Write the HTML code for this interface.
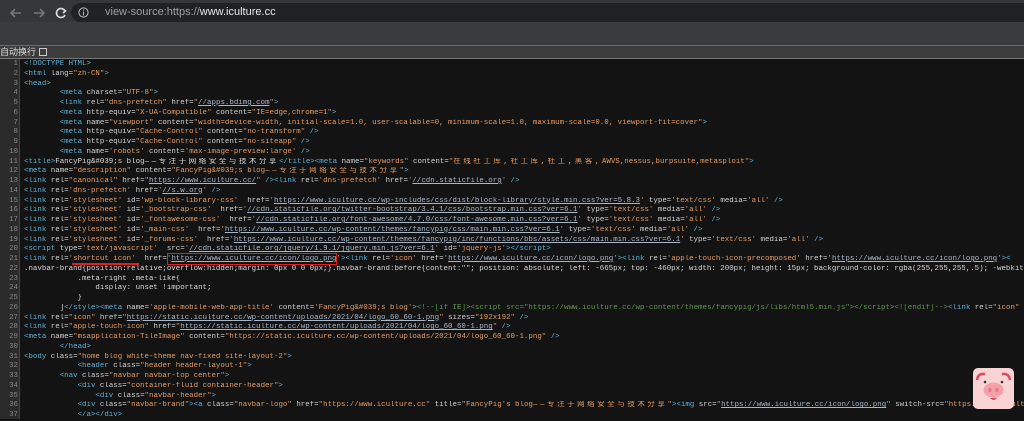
<!DOCTYPE html>
<html><head><meta charset="utf-8"><style>
*{margin:0;padding:0;box-sizing:border-box}
body{width:1024px;height:419px;overflow:hidden;background:#131313;position:relative;font-family:"Liberation Sans","Noto Sans CJK SC",sans-serif}
#tb{position:absolute;left:0;top:0;width:1024px;height:45px;background:#35363a}
#tb2{position:absolute;left:0;top:22px;width:1024px;height:23px;background:#3a3b3f}
#pill{position:absolute;left:71px;top:3px;width:980px;height:19px;border-radius:10px;background:#202124;color:#9aa0a6;font-size:11px;line-height:19px;padding-left:34px}
#pill b{color:#e8eaed;font-weight:normal}
#ibar{position:absolute;left:0;top:45px;width:1024px;height:14px;background:#3c3c3c;border-top:1px solid #6a6a6a;border-bottom:1px solid #777;color:#ddd;font-size:9px;line-height:12px}
#gut{position:absolute;left:0;top:59px;width:20px;height:360px;background:#2a2a2a;border-right:1px solid #444}
#code{position:absolute;left:0;top:60px;width:1024px;font-family:"Liberation Mono","Noto Sans CJK SC",monospace;font-size:7.45px;line-height:9.75px;color:#d8d8d8}
.r{height:9.75px;overflow:hidden;white-space:pre}
.n{display:inline-block;width:18px;text-align:right;color:#888;margin-right:6px}
.t{color:#5db0d7}.a{color:#d0d0d0}.v{color:#e39a62}.l{color:#a9b6c8;text-decoration:underline}.c{color:#5a9a4a}
.z{letter-spacing:2.6px}
</style></head><body>
<div id="tb"></div><div id="tb2"></div>
<svg style="position:absolute;left:8px;top:6px" width="60" height="14" viewBox="0 0 60 14" fill="none" stroke-width="1.6">
<path d="M13 7H3M7 3L3 7L7 11" stroke="#777"/><path d="M26 7H36M32 3L36 7L32 11" stroke="#777"/><path d="M57 5A4.5 4.5 0 1 0 57 9" stroke="#ddd"/><path d="M55 3L57.5 5L55 7" stroke="#ddd"/></svg>
<div id="pill">view-source:https://<b>www.iculture.cc</b></div>
<svg style="position:absolute;left:78px;top:7px" width="11" height="11"><circle cx="5.5" cy="5.5" r="4.6" stroke="#bbb" fill="none"/><path d="M5.5 4.5V8.5M5.5 2.5V3.5" stroke="#bbb"/></svg>
<div id="ibar">自动换行 <span style="display:inline-block;width:8px;height:8px;border:1px solid #ccc;vertical-align:-1px"></span></div>
<div id="gut"></div>
<div id="code"><div class="r"><span class="n">1</span><span class="t">&lt;!DOCTYPE HTML&gt;</span></div><div class="r"><span class="n">2</span><span class="t">&lt;html </span><span class="a">lang=</span><span class="v">"zh-CN"</span><span class="t">&gt;</span></div><div class="r"><span class="n">3</span><span class="t">&lt;head&gt;</span></div><div class="r"><span class="n">4</span>        <span class="t">&lt;meta </span><span class="a">charset=</span><span class="v">"UTF-8"</span><span class="t">&gt;</span></div><div class="r"><span class="n">5</span>        <span class="t">&lt;link </span><span class="a">rel=</span><span class="v">"dns-prefetch"</span> <span class="a">href=</span><span class="v">"</span><span class="l">//apps.bdimg.com</span><span class="v">"</span><span class="t">&gt;</span></div><div class="r"><span class="n">6</span>        <span class="t">&lt;meta </span><span class="a">http-equiv=</span><span class="v">"X-UA-Compatible"</span> <span class="a">content=</span><span class="v">"IE=edge,chrome=1"</span><span class="t">&gt;</span></div><div class="r"><span class="n">7</span>        <span class="t">&lt;meta </span><span class="a">name=</span><span class="v">"viewport"</span> <span class="a">content=</span><span class="v">"width=device-width, initial-scale=1.0, user-scalable=0, minimum-scale=1.0, maximum-scale=0.0, viewport-fit=cover"</span><span class="t">&gt;</span></div><div class="r"><span class="n">8</span>        <span class="t">&lt;meta </span><span class="a">http-equiv=</span><span class="v">"Cache-Control"</span> <span class="a">content=</span><span class="v">"no-transform"</span> <span class="t">/&gt;</span></div><div class="r"><span class="n">9</span>        <span class="t">&lt;meta </span><span class="a">http-equiv=</span><span class="v">"Cache-Control"</span> <span class="a">content=</span><span class="v">"no-siteapp"</span> <span class="t">/&gt;</span></div><div class="r"><span class="n">10</span>        <span class="t">&lt;meta </span><span class="a">name=</span><span class="v">'robots'</span> <span class="a">content=</span><span class="v">'max-image-preview:large'</span> <span class="t">/&gt;</span></div><div class="r"><span class="n">11</span><span class="t">&lt;title&gt;</span>FancyPig&amp;#039;s blog<span class="z">——专注于网络安全与技术分享</span><span class="t">&lt;/title&gt;&lt;meta </span><span class="a">name=</span><span class="v">"keywords"</span> <span class="a">content=</span><span class="v">"<span class="z">在线社工库,社工库,社工,黑客,</span>AWVS,nessus,burpsuite,metasploit"</span><span class="t">&gt;</span></div><div class="r"><span class="n">12</span><span class="t">&lt;meta </span><span class="a">name=</span><span class="v">"description"</span> <span class="a">content=</span><span class="v">"FancyPig&amp;#039;s blog<span class="z">——专注于网络安全与技术分享</span>"</span><span class="t">&gt;</span></div><div class="r"><span class="n">13</span><span class="t">&lt;link </span><span class="a">rel=</span><span class="v">"canonical"</span> <span class="a">href=</span><span class="v">"</span><span class="l">https://www.iculture.cc/</span><span class="v">"</span> <span class="t">/&gt;&lt;link </span><span class="a">rel=</span><span class="v">'dns-prefetch'</span> <span class="a">href=</span><span class="v">'</span><span class="l">//cdn.staticfile.org</span><span class="v">'</span> <span class="t">/&gt;</span></div><div class="r"><span class="n">14</span><span class="t">&lt;link </span><span class="a">rel=</span><span class="v">'dns-prefetch'</span> <span class="a">href=</span><span class="v">'</span><span class="l">//s.w.org</span><span class="v">'</span> <span class="t">/&gt;</span></div><div class="r"><span class="n">15</span><span class="t">&lt;link </span><span class="a">rel=</span><span class="v">'stylesheet'</span> <span class="a">id=</span><span class="v">'wp-block-library-css'</span>  <span class="a">href=</span><span class="v">'</span><span class="l">https://www.iculture.cc/wp-includes/css/dist/block-library/style.min.css?ver=5.8.3</span><span class="v">'</span> <span class="a">type=</span><span class="v">'text/css'</span> <span class="a">media=</span><span class="v">'all'</span> <span class="t">/&gt;</span></div><div class="r"><span class="n">16</span><span class="t">&lt;link </span><span class="a">rel=</span><span class="v">'stylesheet'</span> <span class="a">id=</span><span class="v">'_bootstrap-css'</span>  <span class="a">href=</span><span class="v">'</span><span class="l">//cdn.staticfile.org/twitter-bootstrap/3.4.1/css/bootstrap.min.css?ver=6.1</span><span class="v">'</span> <span class="a">type=</span><span class="v">'text/css'</span> <span class="a">media=</span><span class="v">'all'</span> <span class="t">/&gt;</span></div><div class="r"><span class="n">17</span><span class="t">&lt;link </span><span class="a">rel=</span><span class="v">'stylesheet'</span> <span class="a">id=</span><span class="v">'_fontawesome-css'</span>  <span class="a">href=</span><span class="v">'</span><span class="l">//cdn.staticfile.org/font-awesome/4.7.0/css/font-awesome.min.css?ver=6.1</span><span class="v">'</span> <span class="a">type=</span><span class="v">'text/css'</span> <span class="a">media=</span><span class="v">'all'</span> <span class="t">/&gt;</span></div><div class="r"><span class="n">18</span><span class="t">&lt;link </span><span class="a">rel=</span><span class="v">'stylesheet'</span> <span class="a">id=</span><span class="v">'_main-css'</span>  <span class="a">href=</span><span class="v">'</span><span class="l">https://www.iculture.cc/wp-content/themes/fancypig/css/main.min.css?ver=6.1</span><span class="v">'</span> <span class="a">type=</span><span class="v">'text/css'</span> <span class="a">media=</span><span class="v">'all'</span> <span class="t">/&gt;</span></div><div class="r"><span class="n">19</span><span class="t">&lt;link </span><span class="a">rel=</span><span class="v">'stylesheet'</span> <span class="a">id=</span><span class="v">'_forums-css'</span>  <span class="a">href=</span><span class="v">'</span><span class="l">https://www.iculture.cc/wp-content/themes/fancypig/inc/functions/bbs/assets/css/main.min.css?ver=6.1</span><span class="v">'</span> <span class="a">type=</span><span class="v">'text/css'</span> <span class="a">media=</span><span class="v">'all'</span> <span class="t">/&gt;</span></div><div class="r"><span class="n">20</span><span class="t">&lt;script </span><span class="a">type=</span><span class="v">'text/javascript'</span>  <span class="a">src=</span><span class="v">'</span><span class="l">//cdn.staticfile.org/jquery/1.9.1/jquery.min.js?ver=6.1</span><span class="v">'</span> <span class="a">id=</span><span class="v">'jquery-js'</span><span class="t">&gt;&lt;/script&gt;</span></div><div class="r"><span class="n">21</span><span class="t">&lt;link </span><span class="a">rel=</span><span class="v">'shortcut icon'</span>  <span class="a">href=</span><span class="v">'</span><span class="l">https://www.iculture.cc/icon/logo.png</span><span class="v">'</span><span class="t">&gt;&lt;link </span><span class="a">rel=</span><span class="v">'icon'</span> <span class="a">href=</span><span class="v">'</span><span class="l">https://www.iculture.cc/icon/logo.png</span><span class="v">'</span><span class="t">&gt;&lt;link </span><span class="a">rel=</span><span class="v">'apple-touch-icon-precomposed'</span> <span class="a">href=</span><span class="v">'</span><span class="l">https://www.iculture.cc/icon/logo.png</span><span class="v">'</span><span class="t">&gt;&lt;</span></div><div class="r"><span class="n">22</span>.navbar-brand{position:relative;overflow:hidden;margin: 0px 0 0 0px;}.navbar-brand:before{content:""; position: absolute; left: -665px; top: -460px; width: 200px; height: 15px; background-color: rgba(255,255,255,.5); -webkit</div><div class="r"><span class="n">23</span>            .meta-right .meta-like{</div><div class="r"><span class="n">24</span>                display: unset !important;</div><div class="r"><span class="n">25</span>            }</div><div class="r"><span class="n">26</span>        ]<span class="t">&lt;/style&gt;&lt;meta </span><span class="a">name=</span><span class="v">'apple-mobile-web-app-title'</span> <span class="a">content=</span><span class="v">'FancyPig&amp;#039;s blog'</span><span class="t">&gt;</span><span class="c">&lt;!--[if IE]&gt;&lt;script src="https://www.iculture.cc/wp-content/themes/fancypig/js/libs/html5.min.js"&gt;&lt;/script&gt;&lt;![endif]--&gt;</span><span class="t">&lt;link </span><span class="a">rel=</span><span class="v">"icon"</span> </div><div class="r"><span class="n">27</span><span class="t">&lt;link </span><span class="a">rel=</span><span class="v">"icon"</span> <span class="a">href=</span><span class="v">"</span><span class="l">https://static.iculture.cc/wp-content/uploads/2021/04/logo_60_60-1.png</span><span class="v">"</span> <span class="a">sizes=</span><span class="v">"192x192"</span> <span class="t">/&gt;</span></div><div class="r"><span class="n">28</span><span class="t">&lt;link </span><span class="a">rel=</span><span class="v">"apple-touch-icon"</span> <span class="a">href=</span><span class="v">"</span><span class="l">https://static.iculture.cc/wp-content/uploads/2021/04/logo_60_60-1.png</span><span class="v">"</span> <span class="t">/&gt;</span></div><div class="r"><span class="n">29</span><span class="t">&lt;meta </span><span class="a">name=</span><span class="v">"msapplication-TileImage"</span> <span class="a">content=</span><span class="v">"https://static.iculture.cc/wp-content/uploads/2021/04/logo_60_60-1.png"</span> <span class="t">/&gt;</span></div><div class="r"><span class="n">30</span>        <span class="t">&lt;/head&gt;</span></div><div class="r"><span class="n">31</span><span class="t">&lt;body </span><span class="a">class=</span><span class="v">"home blog white-theme nav-fixed site-layout-2"</span><span class="t">&gt;</span></div><div class="r"><span class="n">32</span>            <span class="t">&lt;header </span><span class="a">class=</span><span class="v">"header header-layout-1"</span><span class="t">&gt;</span></div><div class="r"><span class="n">33</span>        <span class="t">&lt;nav </span><span class="a">class=</span><span class="v">"navbar navbar-top center"</span><span class="t">&gt;</span></div><div class="r"><span class="n">34</span>            <span class="t">&lt;div </span><span class="a">class=</span><span class="v">"container-fluid container-header"</span><span class="t">&gt;</span></div><div class="r"><span class="n">35</span>                <span class="t">&lt;div </span><span class="a">class=</span><span class="v">"navbar-header"</span><span class="t">&gt;</span></div><div class="r"><span class="n">36</span>            <span class="t">&lt;div </span><span class="a">class=</span><span class="v">"navbar-brand"</span><span class="t">&gt;&lt;a </span><span class="a">class=</span><span class="v">"navbar-logo"</span> <span class="a">href=</span><span class="v">"https://www.iculture.cc"</span> <span class="a">title=</span><span class="v">"FancyPig's blog<span class="z">——专注于网络安全与技术分享</span>"</span><span class="t">&gt;&lt;img </span><span class="a">src=</span><span class="v">"</span><span class="l">https://www.iculture.cc/icon/logo.png</span><span class="v">"</span> <span class="a">switch-src=</span><span class="v">"https://www.iculture.cc</span></div><div class="r"><span class="n">37</span>            <span class="t">&lt;/a&gt;&lt;/div&gt;</span></div></div>
<div style="position:absolute;left:167px;top:253px;width:170px;height:12px;border:1.5px solid #e02020"></div>
<div style="position:absolute;left:72px;top:263px;width:67px;height:2px;background:#e02020"></div>
<svg style="position:absolute;left:973px;top:368px" width="41" height="41" viewBox="0 0 41 41">
<rect x="0" y="0" width="41" height="41" rx="5" fill="#fad4d4"/>
<path d="M4 12Q5 5 12 6" stroke="#e0485a" stroke-width="2.5" fill="none"/><path d="M37 12Q36 5 29 6" stroke="#e0485a" stroke-width="2.5" fill="none"/>
<circle cx="12" cy="14" r="1.3" fill="#333"/><circle cx="29" cy="14" r="1.3" fill="#333"/>
<ellipse cx="20.5" cy="22" rx="10" ry="7.5" fill="#f5a0a8"/>
<ellipse cx="17" cy="22" rx="1.6" ry="2.2" fill="#e57a86"/><ellipse cx="24" cy="22" rx="1.6" ry="2.2" fill="#e57a86"/>
<path d="M17 30Q20.5 34 24 30Z" fill="#e0485a"/></svg>
</body></html>
